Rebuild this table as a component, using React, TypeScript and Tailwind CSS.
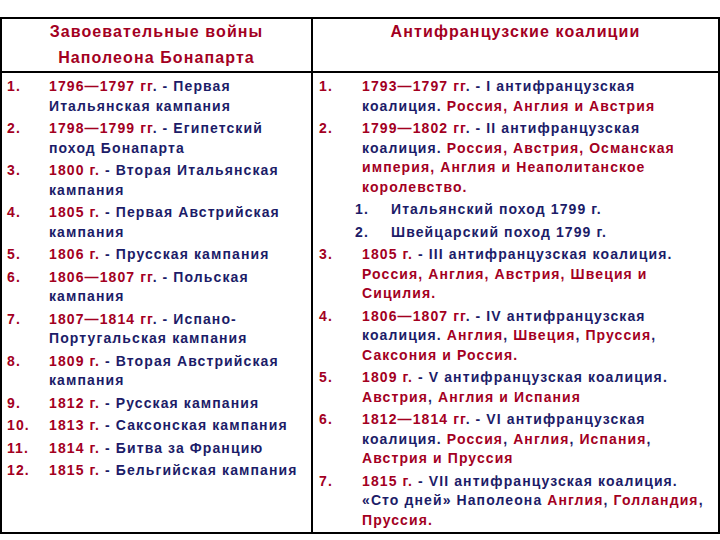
import React from 'react'

// {…} marks the dark-red part of a line, everything else is navy
type Item = { n: string; lines: string[]; sub?: boolean }

const wars: Item[] = [
  { n: '1.', lines: ['{1796—1797 гг}. - Первая', 'Итальянская кампания'] },
  { n: '2.', lines: ['{1798—1799 гг}. - Египетский', 'поход Бонапарта'] },
  { n: '3.', lines: ['{1800 г.} - Вторая Итальянская', 'кампания'] },
  { n: '4.', lines: ['{1805 г.} - Первая Австрийская', 'кампания'] },
  { n: '5.', lines: ['{1806 г.} - Прусская кампания'] },
  { n: '6.', lines: ['{1806—1807 гг}. - Польская', 'кампания'] },
  { n: '7.', lines: ['{1807—1814 гг}. - Испано-', 'Португальская кампания'] },
  { n: '8.', lines: ['{1809 г.} - Вторая Австрийская', 'кампания'] },
  { n: '9.', lines: ['{1812 г.} - Русская кампания'] },
  { n: '10.', lines: ['{1813 г.} - Саксонская кампания'] },
  { n: '11.', lines: ['{1814 г.} - Битва за Францию'] },
  { n: '12.', lines: ['{1815 г.} - Бельгийская кампания'] },
]

const coalitions: Item[] = [
  { n: '1.', lines: ['{1793—1797 гг}. - I антифранцузская', 'коалиция. {Россия, Англия и Австрия}'] },
  {
    n: '2.',
    lines: [
      '{1799—1802 гг}. - II антифранцузская',
      'коалиция. {Россия, Австрия, Османская}',
      '{империя, Англия и Неаполитанское}',
      '{королевство.}',
    ],
  },
  { n: '1.', lines: ['Итальянский поход 1799 г.'], sub: true },
  { n: '2.', lines: ['Швейцарский поход 1799 г.'], sub: true },
  { n: '3.', lines: ['{1805 г.} - III антифранцузская коалиция.', '{Россия, Англия, Австрия, Швеция и}', '{Сицилия.}'] },
  { n: '4.', lines: ['{1806—1807 гг}. - IV антифранцузская', 'коалиция. {Англия}, {Швеция}, {Пруссия},', '{Саксония и Россия.}'] },
  { n: '5.', lines: ['{1809 г.} - V антифранцузская коалиция.', '{Австрия}, {Англия и Испания}'] },
  { n: '6.', lines: ['{1812—1814 гг}. - VI антифранцузская', 'коалиция. {Россия}, {Англия}, {Испания},', '{Австрия и Пруссия}'] },
  { n: '7.', lines: ['{1815 г.} - VII антифранцузская коалиция.', '«Сто дней» Наполеона {Англия}, {Голландия},', '{Пруссия.}'] },
]

function Line({ text }: { text: string }) {
  const parts = text.split(/(\{[^}]*\})/).filter(Boolean)
  return (
    <div className="whitespace-pre">
      {parts.map((p, i) =>
        p.startsWith('{') ? (
          <span key={i} className="text-[#a3001f]">{p.slice(1, -1)}</span>
        ) : (
          <span key={i}>{p}</span>
        )
      )}
    </div>
  )
}

function List({ items, right }: { items: Item[]; right?: boolean }) {
  return (
    <div className={`flex flex-col gap-[3px] pt-[4px] ${right ? 'pl-[6px]' : 'pl-[5px]'}`}>
      {items.map((it, i) => (
        <div key={i} className={`flex ${it.sub ? 'pl-[36px]' : ''}`}>
          <div
            className={`shrink-0 ${
              it.sub ? 'w-[36px] text-[#1c1c68]' : right ? 'w-[43px] text-[#a3001f]' : 'w-[42px] text-[#a3001f]'
            }`}
          >
            {it.n}
          </div>
          <div>
            {it.lines.map((l, j) => (
              <Line key={j} text={l} />
            ))}
          </div>
        </div>
      ))}
    </div>
  )
}

export default function App() {
  return (
    <div className="w-[720px] h-[540px] bg-white pt-[17px] font-['Liberation_Sans',Arial,sans-serif]">
      <div className="h-[517px] border-2 border-black grid grid-cols-[311px_1fr] grid-rows-[54px_1fr] text-[14px] leading-[19.5px] tracking-[1.1px] font-bold text-[#1c1c68]">
        <div className="border-r-2 border-b-2 border-black text-center text-[16px] leading-[26px] text-[#a3001f]">
          Завоевательные войны
          <br />
          Наполеона Бонапарта
        </div>
        <div className="border-b-2 border-black text-center text-[16px] leading-[26px] text-[#a3001f]">
          Антифранцузские коалиции
        </div>
        <div className="border-r-2 border-black">
          <List items={wars} />
        </div>
        <div>
          <List items={coalitions} right />
        </div>
      </div>
    </div>
  )
}
